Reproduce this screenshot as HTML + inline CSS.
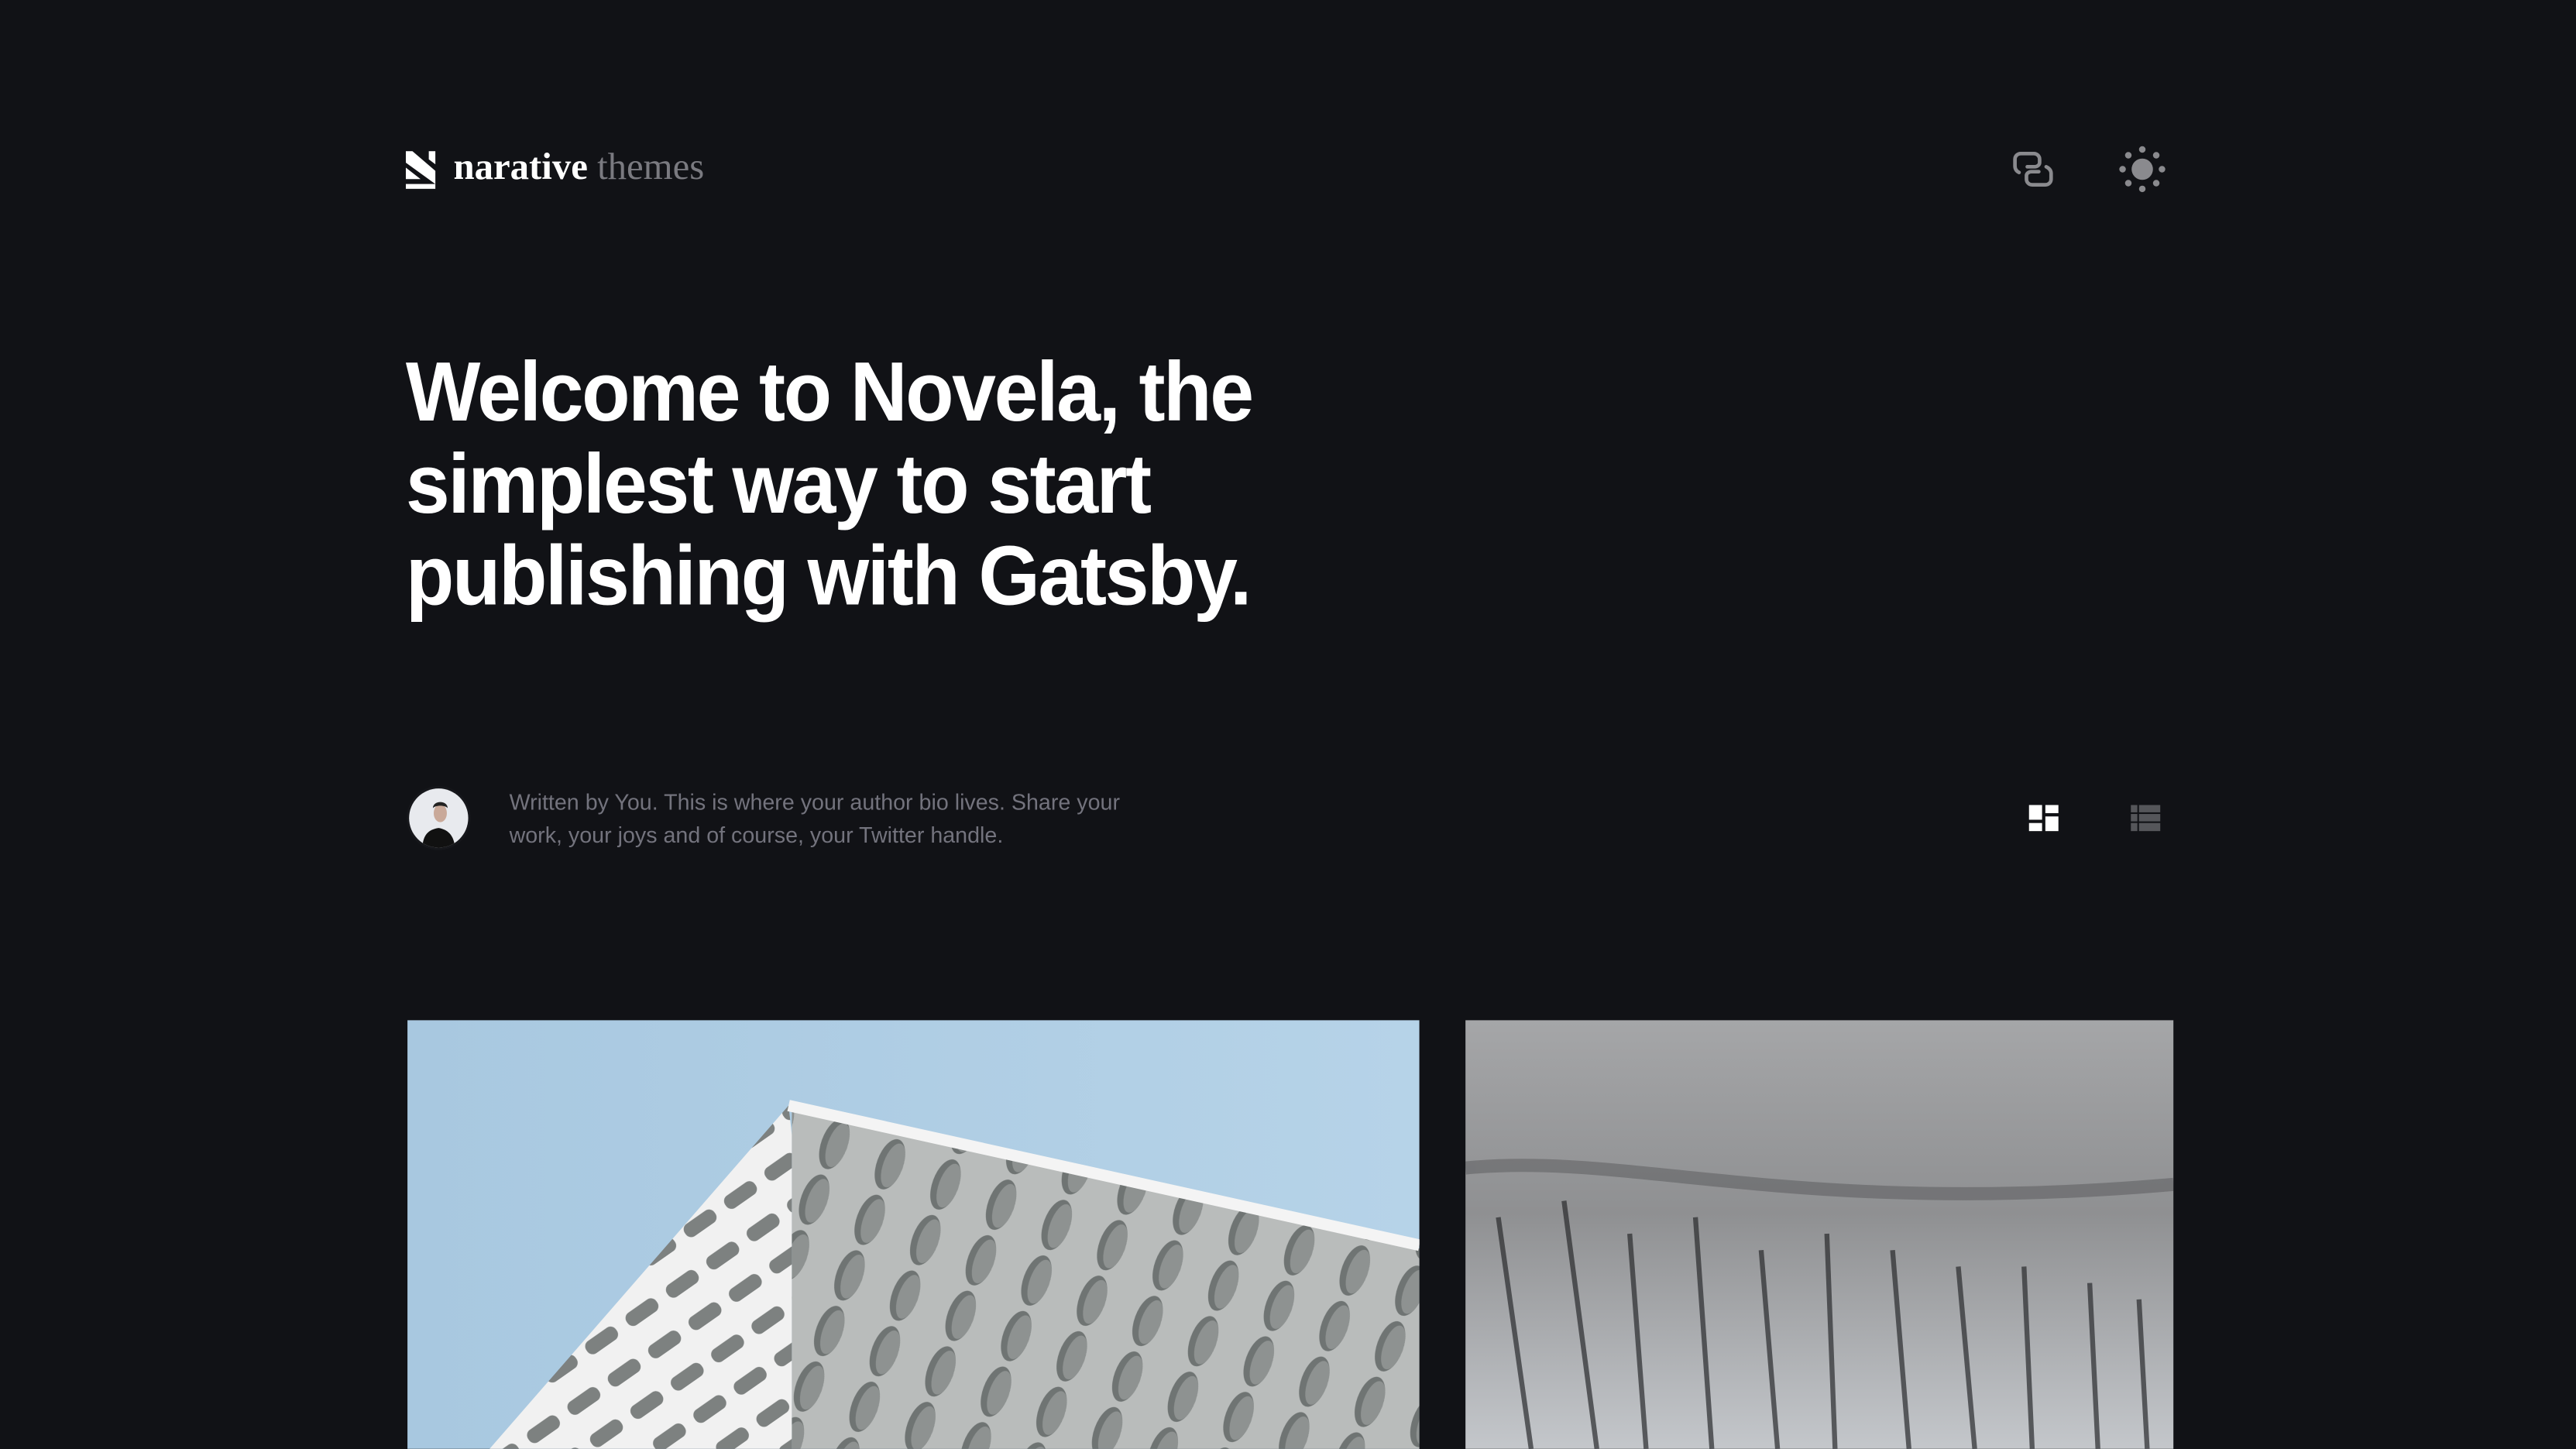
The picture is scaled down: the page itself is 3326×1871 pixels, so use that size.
<!DOCTYPE html>
<html><head><meta charset="utf-8"><style>
html,body{margin:0;padding:0;background:#111216;overflow:hidden}
#w{position:absolute;left:0;top:0;width:1568px;height:882px;transform:scale(2.12117);transform-origin:0 0;font-family:"Liberation Sans",sans-serif}
.a{position:absolute}
h1{position:absolute;left:247px;top:211px;margin:0;color:#fff;font-size:51px;line-height:56px;font-weight:700;letter-spacing:-1.2px;white-space:nowrap}
h1 span{display:block;transform:scaleX(.945);transform-origin:0 0}
.bio{left:310px;top:479px;color:#73737d;font-size:13.5px;line-height:19.5px;width:400px}
</style></head><body><div id="w">
<svg class="a" style="left:247px;top:92px" width="19" height="23" viewBox="0 0 19 23"><path d="M0 0H4L18 12V20L0 7Z" fill="#fff"/><path d="M14 0H18V8L14 5Z" fill="#fff"/><path d="M0 10L9 17H0Z" fill="#fff"/><rect x="0" y="20" width="18" height="3" fill="#fff"/></svg>
<div class="a" style="left:276px;top:89px;font-family:'Liberation Serif',serif;font-size:23px;color:#fff;font-weight:700;white-space:nowrap">narative <span style="color:#7a7a80;font-weight:400">themes</span></div>
<svg class="a" style="left:1225px;top:91px" width="26" height="24" viewBox="0 0 26 24" fill="none" stroke="#8a8a8e" stroke-width="2.2" stroke-linecap="round"><path d="M4 14C2 13 1.5 11.5 1.5 10V6C1.5 4 3 2.5 5 2.5H13C15 2.5 16.5 4 16.5 6V8C16.5 9.5 15 10.5 13.5 10.5H9"/><path d="M20.5 10.5C22.5 11.5 23.5 13 23.5 14.5V18C23.5 20 22 21.5 20 21.5H12C10 21.5 8.5 20 8.5 18V16C8.5 14.5 10 13.5 11.5 13.5H16"/></svg>
<svg class="a" style="left:1288px;top:87px" width="32" height="32" viewBox="0 0 32 32" fill="#8a8a8e"><circle cx="16" cy="16" r="6.5"/><circle cx="16" cy="4" r="2"/><circle cx="16" cy="28" r="2"/><circle cx="4" cy="16" r="2"/><circle cx="28" cy="16" r="2"/><circle cx="7.5" cy="7.5" r="2"/><circle cx="24.5" cy="7.5" r="2"/><circle cx="7.5" cy="24.5" r="2"/><circle cx="24.5" cy="24.5" r="2"/></svg>
<h1><span>Welcome to Novela, the</span><span>simplest way to start</span><span>publishing with Gatsby.</span></h1>
<svg class="a" style="left:247px;top:478px" width="40" height="40" viewBox="0 0 40 40"><defs><clipPath id="c"><circle cx="20" cy="20" r="18"/></clipPath></defs><circle cx="20" cy="20" r="19.5" fill="#16171b"/><g clip-path="url(#c)"><rect width="40" height="40" fill="#e8eaee"/><path d="M10 40C10 31 13 27 20 26C26 27 30 31 30 40Z" fill="#111"/><ellipse cx="21" cy="17" rx="4" ry="5.5" fill="#c9a999"/><path d="M16.5 14C16.5 9 25.5 9 25.5 14C24 12 18 12 16.5 14Z" fill="#222"/></g></svg>
<div class="a bio">Written by You. This is where your author bio lives. Share your work, your joys and of course, your Twitter handle.</div>
<svg class="a" style="left:1235px;top:490px" width="18" height="16" viewBox="0 0 18 16" fill="#fff"><rect x="0" y="0" width="8" height="9"/><rect x="10" y="0" width="8" height="5"/><rect x="0" y="11" width="8" height="5"/><rect x="10" y="7" width="8" height="9"/></svg>
<svg class="a" style="left:1297px;top:490px" width="18" height="16" viewBox="0 0 18 16" fill="#55565a"><rect x="0" y="0" width="4" height="4.5"/><rect x="5" y="0" width="13" height="4.5"/><rect x="0" y="5.5" width="4" height="4.5"/><rect x="5" y="5.5" width="13" height="4.5"/><rect x="0" y="11" width="4" height="5"/><rect x="5" y="11" width="13" height="5"/></svg>
<svg class="a" style="left:248px;top:621px" width="616" height="261" viewBox="0 0 616 261">
<defs><linearGradient id="sky" x1="0" y1="0" x2="1" y2="0"><stop offset="0" stop-color="#a8c8e0"/><stop offset="1" stop-color="#b6d3e8"/></linearGradient>
<pattern id="p" width="36" height="36" patternUnits="userSpaceOnUse" patternTransform="rotate(20)"><rect width="36" height="36" fill="#b9bcbb"/><ellipse cx="18" cy="18" rx="8" ry="16" fill="#6f7473"/><ellipse cx="20" cy="18" rx="6" ry="14" fill="#8e9291"/></pattern>
<pattern id="q" width="30" height="24" patternUnits="userSpaceOnUse" patternTransform="rotate(-35)"><rect width="30" height="24" fill="#f1f1f1"/><rect x="4" y="7" width="22" height="9" rx="4" fill="#7d8180"/></pattern></defs>
<rect width="616" height="261" fill="url(#sky)"/>
<path d="M232 52L50 261H234V70Z" fill="url(#q)"/>
<path d="M234 55L616 139V261H234Z" fill="url(#p)"/>
<path d="M232 52L616 137" stroke="#f4f4f4" stroke-width="7"/>
</svg>
<svg class="a" style="left:892px;top:621px" width="431" height="261" viewBox="0 0 431 261">
<defs><linearGradient id="g2" x1="0" y1="0" x2="0" y2="1"><stop offset="0" stop-color="#a5a6a8"/><stop offset=".45" stop-color="#8f9092"/><stop offset="1" stop-color="#c4c7cb"/></linearGradient></defs>
<rect width="431" height="261" fill="url(#g2)"/>
<g stroke="#2a2b2d" stroke-width="3" opacity=".7" fill="none">
<path d="M20 120L40 261M60 110L80 261M100 130L110 261M140 120L150 261M180 140L190 261M220 130L225 261M260 140L270 261M300 150L310 261M340 150L345 261M380 160L385 261M410 170L415 261"/>
<path d="M0 90C100 80 200 120 431 100" stroke-width="8" opacity=".4"/></g>
</svg>
</div></body></html>
